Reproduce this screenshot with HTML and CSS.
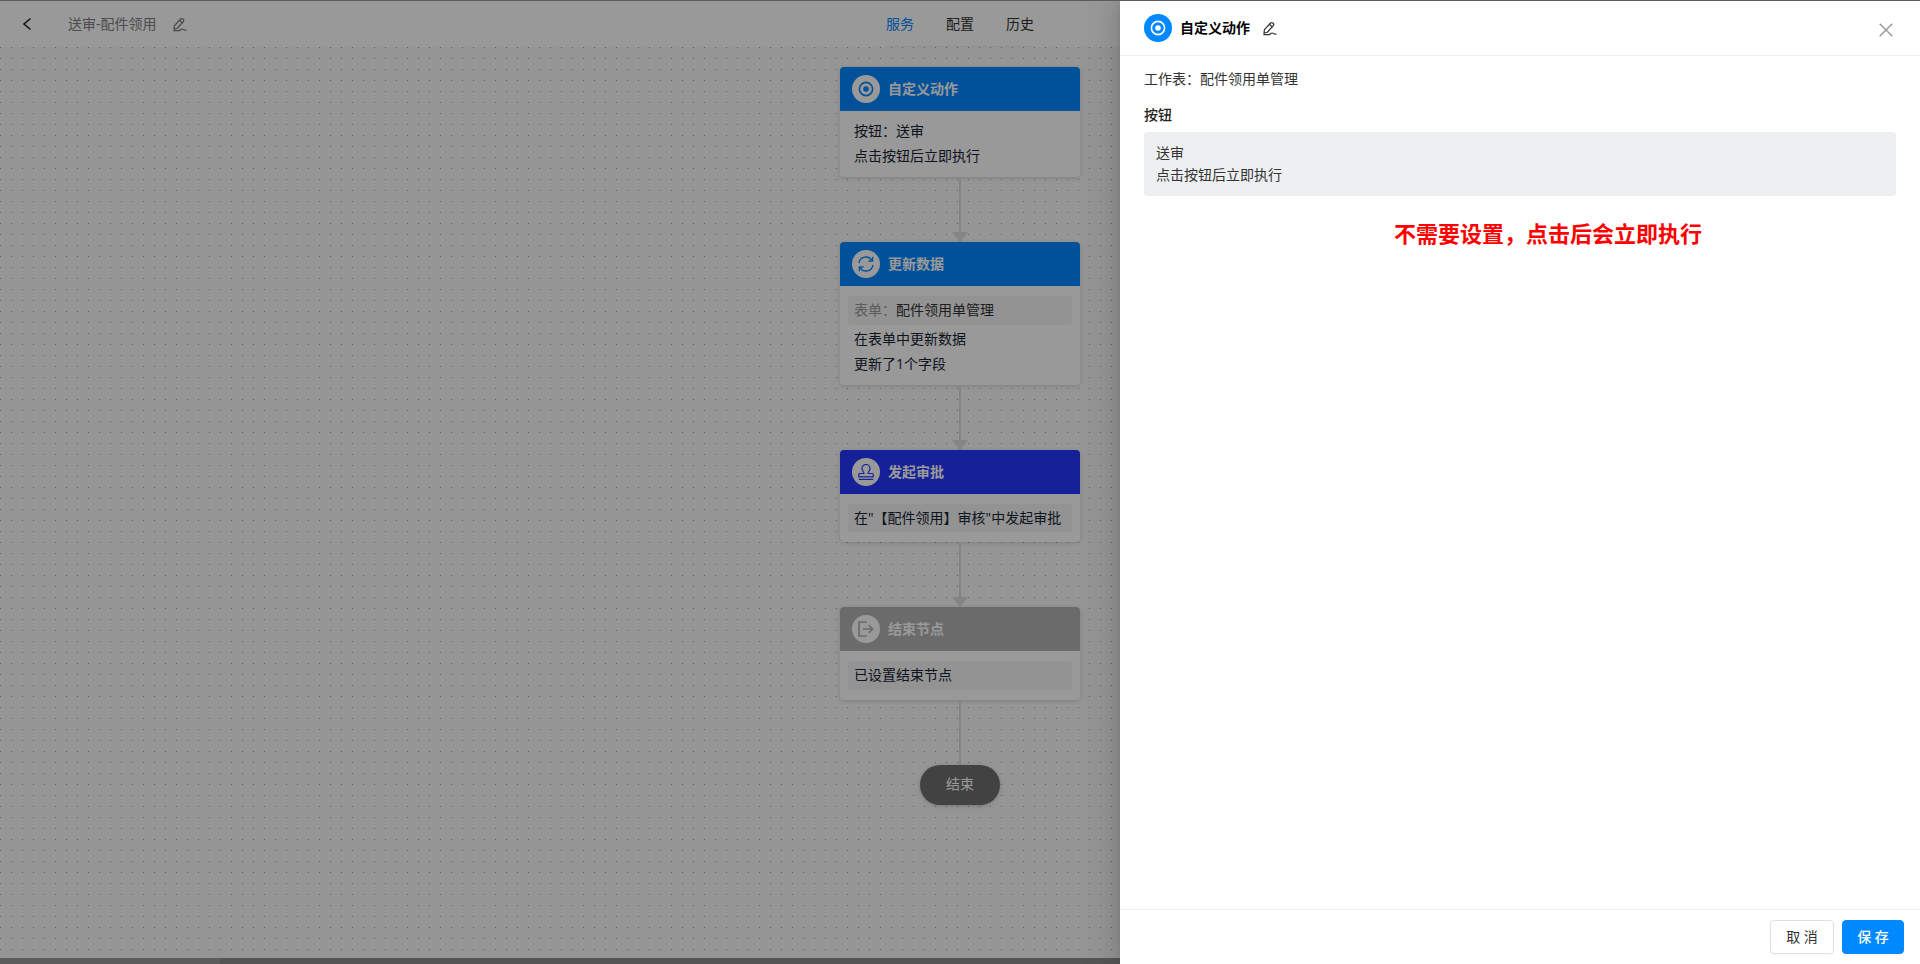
FILE: index.html
```
<!DOCTYPE html>
<html lang="zh-CN">
<head>
<meta charset="utf-8">
<title>送审-配件领用</title>
<link rel="stylesheet" href="styles.css">
</head>
<body>
<svg class="sprite" aria-hidden="true">
  <symbol id="i-edit" viewBox="0 0 16 16"><g fill="none" stroke="currentColor" stroke-width="1.3" stroke-linejoin="round" stroke-linecap="round"><path d="M2.6 9.2 9.2 2.1a1.6 1.6 0 0 1 2.3 0l.6.6a1.6 1.6 0 0 1 0 2.3L5.6 12l-3.5 1.1z"/><path d="M8 3.5 10.800 6.300M2 14.600h5.500c1.500-.2 2-1.800 3.500-1.800s1.600 1.600 4 1.200"/></g></symbol>
  <symbol id="i-target" viewBox="0 0 16 16"><g fill="none" stroke="currentColor"><circle cx="8" cy="8" r="6.600" stroke-width="1.600"/><circle cx="8" cy="8" r="2.800" fill="currentColor" stroke="none"/></g></symbol>
  <symbol id="i-sync" viewBox="0 0 16 16"><g fill="none" stroke="currentColor" stroke-width="1.300"><path d="M1 7.200A7 7 0 0 1 13.800 4.200M15 8.800A7 7 0 0 1 2.200 11.800"/><path d="M14.600.8v4.200h-4.200M1.400 15.200V11h4.200"/></g></symbol>
  <symbol id="i-stamp" viewBox="0 0 16 16"><g fill="none" stroke="currentColor" stroke-width="1.200" stroke-linejoin="round"><path d="M6 9.500c0-2-2-2.600-2-5a4 4 0 0 1 8 0c0 2.400-2 3-2 5h4.200a1 1 0 0 1 1 1v2.300H.8v-2.300a1 1 0 0 1 1-1z"/><path d="M.8 15.400h14.400"/></g></symbol>
  <symbol id="i-exit" viewBox="0 0 16 16"><g fill="none" stroke="currentColor" stroke-width="1.700"><path d="M9 1H1v14h8M5 8h9.500M10.800 4.200 14.600 8l-3.800 3.800"/></g></symbol>
</svg>

<div class="app">
  <header class="topbar">
    <div class="topbar-left">
      <button class="icon-btn back" aria-label="返回"><svg width="10" height="14" viewBox="0 0 10 14"><path d="M8.500 1.500 2 7l6.500 5.500" fill="none" stroke="currentColor" stroke-width="1.600"/></svg></button>
      <span class="flow-name">送审-配件领用</span>
      <button class="icon-btn flow-edit" aria-label="编辑名称"><svg width="15" height="15"><use href="#i-edit"/></svg></button>
    </div>
    <nav class="tabs">
      <a class="tab active" href="#service">服务</a>
      <a class="tab" href="#config">配置</a>
      <a class="tab" href="#history">历史</a>
    </nav>
  </header>

  <main class="canvas">
    <section class="node">
      <h2 class="node-head"><span class="badge"><svg width="16" height="16"><use href="#i-target"/></svg></span>自定义动作</h2>
      <div class="node-body">
        <p class="row">按钮：送审</p>
        <p class="row">点击按钮后立即执行</p>
      </div>
    </section>
    <div class="link arrow"></div>
    <section class="node">
      <h2 class="node-head"><span class="badge"><svg width="16" height="16"><use href="#i-sync"/></svg></span>更新数据</h2>
      <div class="node-body with-chip">
        <p class="chip"><span class="muted">表单：</span><span class="ref">配件领用单管理</span></p>
        <p class="row">在表单中更新数据</p>
        <p class="row">更新了1个字段</p>
      </div>
    </section>
    <div class="link arrow"></div>
    <section class="node approval">
      <h2 class="node-head"><span class="badge"><svg width="16" height="16"><use href="#i-stamp"/></svg></span>发起审批</h2>
      <div class="node-body chip-only">
        <p class="chip compact">在"【配件领用】审核"中发起审批</p>
      </div>
    </section>
    <div class="link arrow"></div>
    <section class="node finish">
      <h2 class="node-head"><span class="badge"><svg width="16" height="16"><use href="#i-exit"/></svg></span>结束节点</h2>
      <div class="node-body chip-only">
        <p class="chip">已设置结束节点</p>
      </div>
    </section>
    <div class="link"></div>
    <div class="end-pill">结束</div>
  </main>
  <div class="scroll-track"><div class="scroll-thumb"></div></div>

  <div class="mask"></div>

  <aside class="drawer" aria-label="自定义动作">
    <header class="drawer-head">
      <span class="badge solid"><svg width="16" height="16"><use href="#i-target"/></svg></span>
      <h1 class="drawer-title">自定义动作</h1>
      <button class="icon-btn" aria-label="编辑"><svg width="15" height="15"><use href="#i-edit"/></svg></button>
      <button class="icon-btn close" aria-label="关闭"><svg width="14" height="14" viewBox="0 0 14 14"><path d="m.7.7 12.600 12.600M13.300.7.7 13.300" fill="none" stroke="currentColor" stroke-width="1.500"/></svg></button>
    </header>
    <div class="drawer-body">
      <p class="sheet">工作表：配件领用单管理</p>
      <h3 class="label">按钮</h3>
      <div class="info">
        <p>送审</p>
        <p>点击按钮后立即执行</p>
      </div>
      <p class="note">不需要设置，点击后会立即执行</p>
    </div>
    <footer class="drawer-foot">
      <button class="btn">取 消</button>
      <button class="btn primary">保 存</button>
    </footer>
  </aside>
</div>
</body>
</html>
```

FILE: styles.css
```
* { box-sizing: border-box; }

body {
  margin: 0;
  border-top: 1px solid #5c5a5c;
  font: 14px/22px "Open Sans", "Noto Sans CJK SC", sans-serif;
  color: #333;
}

h1, h2, h3, p { margin: 0; font-size: 14px; }

button { font: inherit; cursor: pointer; }

.sprite { display: none; }

.app {
  position: relative;
  display: flex;
  flex-direction: column;
  min-height: calc(100vh - 1px);
}

.icon-btn {
  display: inline-flex;
  padding: 0;
  border: 0;
  background: none;
  color: inherit;
}

/* top bar */
.topbar {
  display: grid;
  grid-template-columns: 1fr auto 1fr;
  height: 46px;
  background: #fff;
}

.topbar-left {
  display: flex;
  align-items: center;
  padding-left: 22px;
}

.back { color: #222; }
.flow-name { margin-left: 36px; color: #808080; }
.flow-edit { margin-left: 15px; color: #777; }

.tabs {
  display: flex;
  align-items: center;
  gap: 32px;
  border-bottom: 1px solid #eee;
}

.tab { color: #333; text-decoration: none; }
.tab.active { color: #0088ff; }

/* flow canvas */
.canvas {
  flex: 1;
  display: flex;
  flex-direction: column;
  align-items: center;
  padding-top: 20px;
  background: conic-gradient(from 270deg at 1px 1px, #989cbc 90deg, #f9f9f9 0) 0 0 / 11px 11px;
}

.node {
  width: 240px;
  border-radius: 4px;
  background: #fff;
  box-shadow: 0 1px 4px rgba(0, 0, 0, .16);
}

.node-head {
  display: flex;
  align-items: center;
  gap: 8px;
  height: 44px;
  padding: 0 12px;
  border-radius: 4px 4px 0 0;
  background: #0088ff;
  color: #fff;
}

.approval .node-head { background: #2538ff; }
.finish .node-head { background: #b3b3b3; }

.badge {
  display: flex;
  align-items: center;
  justify-content: center;
  width: 28px;
  height: 28px;
  border-radius: 50%;
  background: #fff;
  color: #0088ff;
}

.approval .badge { color: #2538ff; }
.finish .badge { color: #b3b3b3; }
.badge.solid { background: #0088ff; color: #fff; }

.node-body { padding: 7px 8px 9px; color: #172433; }
.node-body.with-chip { padding-top: 10px; }
.node-body.chip-only { padding: 10px 8px; }

.row { padding: 0 6px; line-height: 25px; }

.chip {
  padding: 0 6px 2px;
  border-radius: 4px;
  background: #f5f5f5;
  line-height: 27px;
}

.chip.compact { padding-bottom: 0; line-height: 28px; }
.with-chip .chip { margin-bottom: 1px; }
.muted { color: #999; }
.ref { color: #333; }

.link {
  display: flex;
  flex-direction: column;
  align-items: center;
  width: 16px;
  height: 65px;
}

.link::before {
  content: "";
  flex: 1;
  width: 2px;
  background: #dcdcdc;
}

.link.arrow::after {
  content: "";
  border: 8px solid transparent;
  border-top: 10px solid #dcdcdc;
  border-bottom: 0;
}

.end-pill {
  width: 80px;
  padding-bottom: 2px;
  border-radius: 20px;
  background: #6e6e6e;
  box-shadow: 0 1px 4px rgba(0, 0, 0, .2);
  color: #fff;
  line-height: 38px;
  text-align: center;
}

.scroll-track { height: 6px; background: #8e8e8e; }
.scroll-thumb { width: 220px; height: 6px; background: #9a9a9a; }

/* drawer */
.mask {
  position: absolute;
  inset: 0;
  background: rgba(0, 0, 0, .4);
}

.drawer {
  position: absolute;
  inset: 0 0 0 auto;
  display: flex;
  flex-direction: column;
  width: 800px;
  max-width: 100%;
  background: #fff;
  box-shadow: -6px 0 16px rgba(0, 0, 0, .08), -3px 0 6px -4px rgba(0, 0, 0, .12), -9px 0 28px 8px rgba(0, 0, 0, .05);
}

.drawer-head {
  display: flex;
  align-items: center;
  height: 55px;
  padding: 0 27px 0 24px;
  border-bottom: 1px solid #eee;
}

.drawer-title { margin: 0 12px 0 8px; color: #000; }
.close { margin: 4px 0 0 auto; color: #999; }

.drawer-body { flex: 1; padding: 12px 24px; }
.label { margin: 14px 0 6px; font-weight: 500; color: #222; }

.info {
  padding: 10px 12px;
  border-radius: 4px;
  background: #eeeff1;
}

.note {
  margin-top: 22px;
  padding-left: 56px;
  color: #ff0000;
  font-size: 22px;
  font-weight: 700;
  line-height: 30px;
  text-align: center;
}

.drawer-foot {
  display: flex;
  justify-content: flex-end;
  gap: 8px;
  padding: 10px 16px;
  border-top: 1px solid #eee;
}

.btn {
  min-width: 64px;
  height: 34px;
  padding: 0 14px;
  border: 1px solid #e0e0e0;
  border-radius: 4px;
  background: #fff;
  box-shadow: 0 2px 0 rgba(0, 0, 0, .02);
  color: #333;
}

.btn.primary {
  min-width: 62px;
  border-color: #0088ff;
  background: #0088ff;
  color: #fff;
  font-weight: 500;
}
```
